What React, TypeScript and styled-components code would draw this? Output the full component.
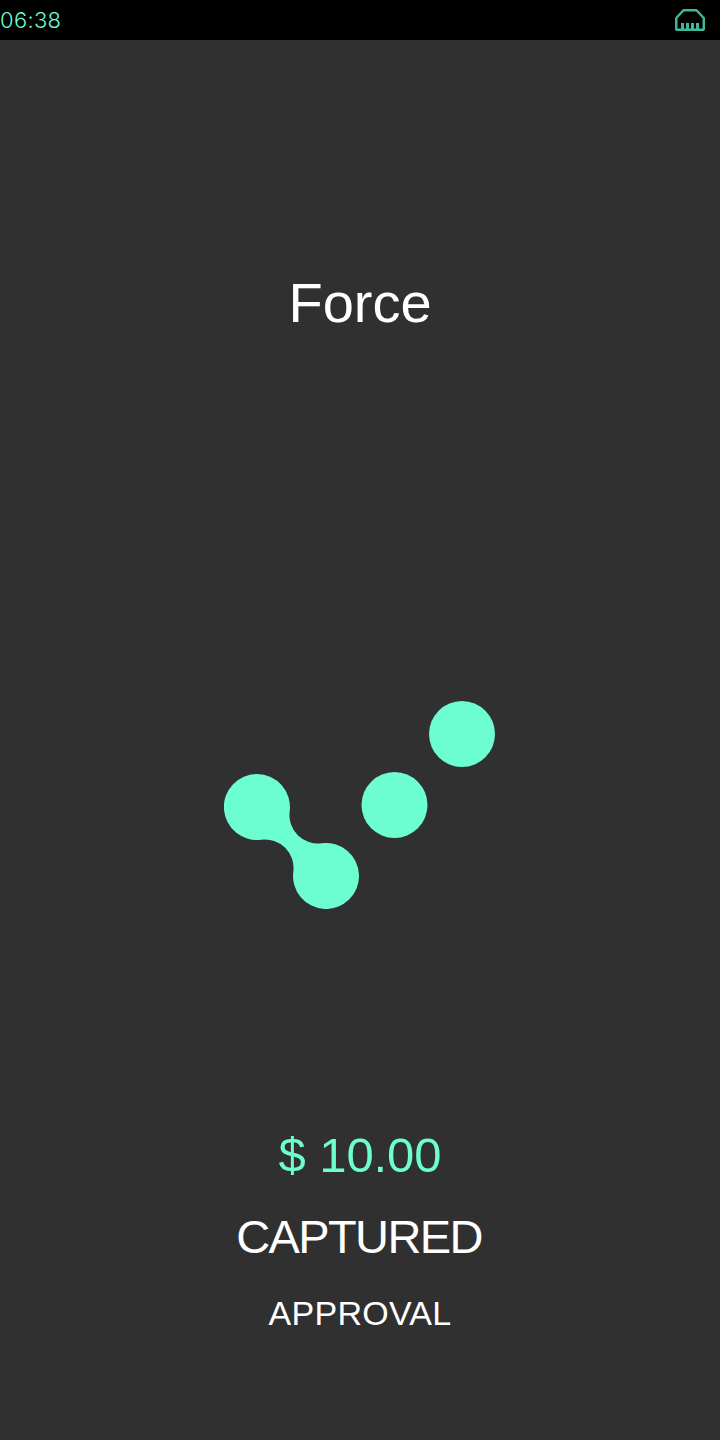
import React from "react";
import styled, { createGlobalStyle } from "styled-components";

const Global = createGlobalStyle`
  html, body { margin: 0; padding: 0; background: #303030; }
  #root { width: 720px; height: 1440px; }
`;

const Screen = styled.div`
  width: 720px;
  height: 1440px;
  display: flex;
  flex-direction: column;
  background: #303030;
  font-family: "Liberation Sans", Arial, sans-serif;
  overflow: hidden;
`;

const StatusBar = styled.header`
  height: 40px;
  flex: none;
  background: #000;
  display: flex;
  align-items: center;
  justify-content: space-between;
  padding-right: 14px;
  color: #6cfdd1;
`;

const Clock = styled.span`
  font-family: "Inter", sans-serif;
  font-weight: 300;
  font-size: 22px;
  letter-spacing: 0.3px;
  line-height: 40px;
`;

const Title = styled.h1`
  margin: 232px 0 0;
  height: 62px;
  font-size: 56px;
  line-height: 62px;
  font-weight: 400;
  color: #fff;
  text-align: center;
`;

const LogoWrap = styled.div`
  margin-top: 367px;
  padding-left: 224px;
  height: 208px;
`;

const Amount = styled.div`
  margin-top: 218px;
  text-align: center;
  color: #6cfdd1;
  font-size: 49px;
  letter-spacing: -0.1px;
  line-height: 56px;
`;

const Status = styled.div`
  margin-top: 27px;
  text-align: center;
  color: #fff;
  font-size: 47px;
  letter-spacing: -1.6px;
  text-indent: -2px;
  line-height: 54px;
`;

const Detail = styled.div`
  margin-top: 28px;
  text-align: center;
  color: #fff;
  font-size: 34px;
  letter-spacing: 0.25px;
  line-height: 42px;
`;

const EthernetIcon = () => (
  <svg width="32" height="24" viewBox="0 0 32 24" fill="none">
    <path
      d="M2.25 21.75V10L9.5 2.25H22.5L29.75 10V21.75H2.25Z"
      stroke="#3fb89a"
      strokeWidth="2.5"
      strokeLinejoin="bevel"
    />
    <path d="M7 15h3v6H7zM12 15h3v6h-3zM17 15h3v6h-3zM22 15h3v6h-3z" fill="#3fb89a" />
  </svg>
);

const Logo = () => (
  <svg width="272" height="208" viewBox="224 701 272 208">
    <g fill="#6cfdd1">
      <path d="M257 774A33 33 0 0 1 289.7 811.3A28.5 28.5 0 0 0 321.7 843.3A33 33 0 1 1 293.3 871.7A28.5 28.5 0 0 0 261.3 839.7A33 33 0 1 1 257 774Z" />
      <circle cx="394.5" cy="805" r="33" />
      <circle cx="462" cy="734" r="33" />
    </g>
  </svg>
);

export default function App() {
  return (
    <Screen>
      <Global />
      <StatusBar>
        <Clock>06:38</Clock>
        <EthernetIcon />
      </StatusBar>
      <Title>Force</Title>
      <LogoWrap>
        <Logo />
      </LogoWrap>
      <Amount>$ 10.00</Amount>
      <Status>CAPTURED</Status>
      <Detail>APPROVAL</Detail>
    </Screen>
  );
}
